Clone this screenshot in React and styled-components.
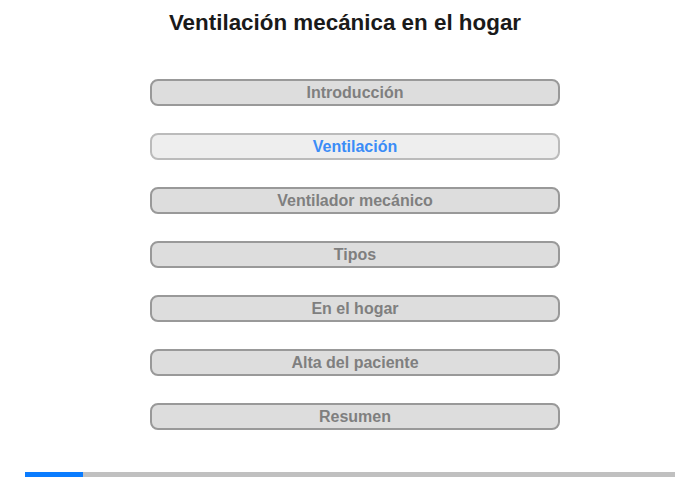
import React from "react";
import styled, { createGlobalStyle } from "styled-components";

const Global = createGlobalStyle`
  html, body { margin: 0; padding: 0; background: #fff; }
  body { font-family: "Liberation Sans", Arial, sans-serif; }
`;

const Page = styled.div`
  width: 700px;
  height: 480px;
  display: flex;
  flex-direction: column;
  align-items: center;
`;

const Title = styled.h1`
  margin: 10px 0 0;
  font-size: 22.4px;
  font-weight: bold;
  color: #1a1a1a;
  line-height: 26px;
  transform: translateX(-5px);
`;

const Menu = styled.nav`
  margin-top: 43px;
  display: flex;
  flex-direction: column;
  gap: 27px;
  transform: translateX(5px);
`;

const Item = styled.div`
  box-sizing: border-box;
  width: 410px;
  height: 27px;
  border: 2px solid ${(p) => (p.$active ? "#bbbbbb" : "#999999")};
  border-radius: 8px;
  background: ${(p) => (p.$active ? "#eeeeee" : "#dddddd")};
  color: ${(p) => (p.$active ? "#3a8cf7" : "#7f7f7f")};
  font-size: 16px;
  font-weight: bold;
  display: flex;
  align-items: center;
  justify-content: center;
  line-height: 1;
`;

const Track = styled.div`
  margin-top: auto;
  margin-bottom: 3px;
  width: 650px;
  height: 5px;
  background: #c0c0c0;
  display: flex;
`;

const Fill = styled.div`
  height: 100%;
  background: #0a7cff;
`;

const items = [
  "Introducción",
  "Ventilación",
  "Ventilador mecánico",
  "Tipos",
  "En el hogar",
  "Alta del paciente",
  "Resumen",
];

export default function App() {
  return (
    <Page>
      <Global />
      <Title>Ventilación mecánica en el hogar</Title>
      <Menu>
        {items.map((t, i) => (
          <Item key={t} $active={i === 1}>
            {t}
          </Item>
        ))}
      </Menu>
      <Track>
        <Fill style={{ width: "58px" }} />
      </Track>
    </Page>
  );
}
